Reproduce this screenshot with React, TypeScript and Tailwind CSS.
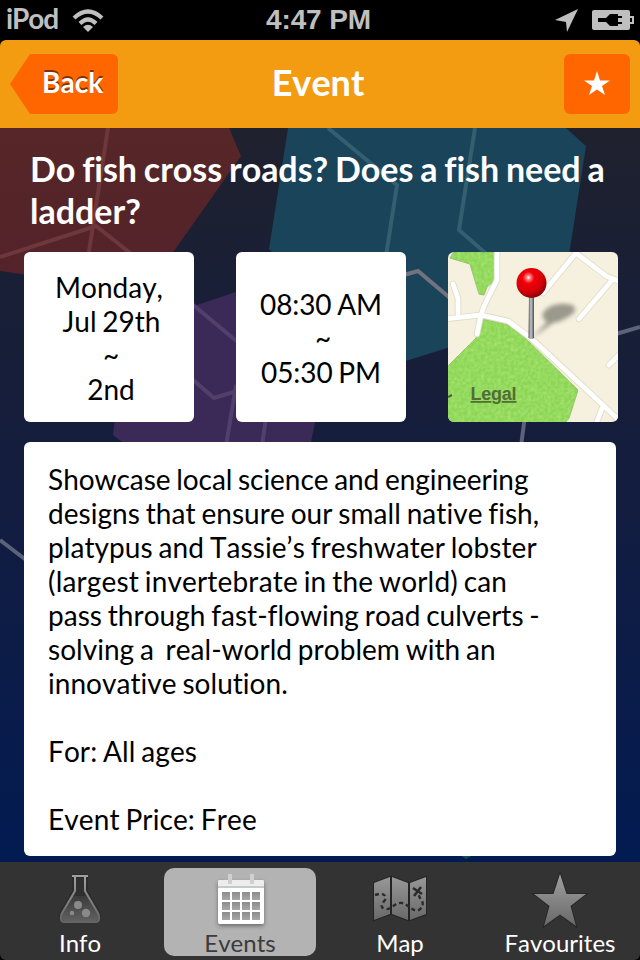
import type { ReactNode } from "react";

function Backdrop() {
  return (
    <svg className="absolute inset-0 h-full w-full" viewBox="0 128 640 734" preserveAspectRatio="none" aria-hidden="true">
      <defs>
        <linearGradient id="night" x1="0" y1="0" x2="0" y2="1">
          <stop offset="0" stopColor="#1f212e" />
          <stop offset="0.2" stopColor="#191f35" />
          <stop offset="0.45" stopColor="#141d3d" />
          <stop offset="0.75" stopColor="#0b1c49" />
          <stop offset="1" stopColor="#021b52" />
        </linearGradient>
        <linearGradient id="red" x1="0" y1="0" x2="0" y2="1">
          <stop offset="0" stopColor="#562628" />
          <stop offset="1" stopColor="#54222a" />
        </linearGradient>
      </defs>
      <rect y="128" width="640" height="734" fill="url(#night)" />
      <path d="M0 128H229L241 156L145 292L0 271Z" fill="url(#red)" />
      <path d="M288 128H566L586 146L560 313L380 369L269 249Z" fill="#19445a" />
      <path d="M125 329L236 292L330 350L311 442H122L113 435Z" fill="#3b2a57" />
      <g fill="none" strokeWidth="4">
        <path d="M108 128L88 258M0 257L96 226L134 256" stroke="#6d383c" />
        <path d="M328 128L397 185L386 256M475 128L459 230L490 257" stroke="#345f71" />
        <path d="M400 276L418 271L450 298" stroke="#75727f" />
        <path d="M192 304L240 344M192 379L214 398L240 390M236 385L226 446M267 410L262 446" stroke="#533f6c" />
        <path d="M0 540L30 563M616 334L640 327M525 416L521 446" stroke="#5c6277" />
      </g>
      <path d="M460 855L473 855L466 859Z" fill="#11513f" />
    </svg>
  );
}

function StatusBar() {
  return (
    <div className="flex h-10 items-center justify-between bg-black font-['Liberation_Sans',sans-serif] text-[#bfbfbf]">
      <div className="flex w-[200px] items-center pl-[6px]">
        <span className="w-[64px] pb-[3px] font-[Lato,sans-serif] text-[28px] leading-[37px] font-bold tracking-[-1.1px]">iPod</span>
        <svg width="34" height="26" viewBox="70 6 34 26" fill="none">
          <path d="M74 17Q88 4 102 17M80 22.5Q88 14.5 96 22.5" stroke="#bfbfbf" strokeWidth="4.2" />
          <path d="M83 26Q88 21.5 93 26L88 31Z" fill="#bfbfbf" />
        </svg>
      </div>
      <span className="-ml-[3px] text-[28px] leading-10 font-bold tracking-[-0.1px]">4:47 PM</span>
      <div className="flex w-[200px] justify-end pr-[5px]">
        <svg width="80" height="26" viewBox="555 6 80 26">
          <path d="M578 8L555 19L566 21L567 31Z" fill="#bfbfbf" />
          <path d="M594 9H628Q630 9 630 11V15H634V23H630V27Q630 29 628 29H594Q592 29 592 27V11Q592 9 594 9Z" fill="#bfbfbf" />
          <path d="M598 17H606L610 13H618V15H622V17H618V21H622V23H618V25H610L606 21H598ZM630 17H632V21H630Z" fill="#000" />
        </svg>
      </div>
    </div>
  );
}

function Header() {
  return (
    <header className="flex h-[88px] items-center justify-between rounded-t-[6px] bg-[#f39c12] pr-[10px] pl-[10px] text-white">
      <button className="flex h-[60px] w-[108px] items-center rounded-r-[6px] bg-[#ff6600] pl-[32px] [clip-path:polygon(0_50%,20px_0,100%_0,100%_100%,20px_100%)]">
        <span className="pb-[4px] text-[28px] leading-[34px] font-bold [text-shadow:0_-2px_0_#803300]">Back</span>
      </button>
      <h1 className="-ml-[4px] pb-[4px] text-[36px] leading-[44px] font-bold">Event</h1>
      <div className="flex w-[108px] justify-end">
        <button className="flex h-[60px] w-[66px] items-center justify-center rounded-[6px] bg-[#ff6600]">
          <svg width="26" height="26" viewBox="0 0 26 26">
            <path d="M13 0L16 9.500H26L18 15L21 24L13 18.500L5 24L8 15L0 9.500H10Z" fill="#fff" />
          </svg>
        </button>
      </div>
    </header>
  );
}

function MapTile() {
  return (
    <svg className="h-[170px] w-[170px] shrink-0 rounded-[6px]" viewBox="0 0 170 170">
      <defs>
        <filter id="grass" x="0" y="0" width="1" height="1" colorInterpolationFilters="sRGB">
          <feTurbulence type="fractalNoise" baseFrequency="0.3" numOctaves="2" seed="4" result="n" />
          <feColorMatrix in="n" type="matrix" values="0 0 0 0 0.67  0 0 0 0 0.9  0 0 0 0 0.46  1.6 0 0 0 -0.5" result="c" />
          <feComposite in="c" in2="SourceAlpha" operator="in" result="t" />
          <feMerge><feMergeNode in="SourceGraphic" /><feMergeNode in="t" /></feMerge>
        </filter>
        <filter id="soft" x="-30%" y="-30%" width="160%" height="160%"><feGaussianBlur stdDeviation="2" /></filter>
        <radialGradient id="ball" cx="0.4" cy="0.32" r="0.7">
          <stop offset="0" stopColor="#fff" />
          <stop offset="0.12" stopColor="#ff7070" />
          <stop offset="0.28" stopColor="#f10008" />
          <stop offset="0.65" stopColor="#d90008" />
          <stop offset="1" stopColor="#880006" />
        </radialGradient>
        <linearGradient id="needle">
          <stop offset="0" stopColor="#50545c" />
          <stop offset="0.45" stopColor="#c5c9ce" />
          <stop offset="1" stopColor="#454a53" />
        </linearGradient>
      </defs>
      <rect width="170" height="170" fill="#f6f0df" />
      <g fill="#8cd656" stroke="#91b768" strokeWidth="1" filter="url(#grass)">
        <path d="M6 0H47V28L39 35L36 43L31 42L22 12L2 6Z" />
        <path d="M36 67L60 73L74 83L130 138L121 166L117 171H-1V115L28 86Z" />
      </g>
      <g fill="none" strokeLinecap="round" strokeLinejoin="round">
        <g stroke="#dfdcc7" strokeWidth="6.500">
          <path d="M-3 67L33 63L60 69L84 87L172 169M49 -3V28L36 54L33 63L29 82M5 32L10 46V62" />
          <path d="M95 41L128 1L158 24L173 30M165 27L131 67M173 101L161 113M155 154L148 172" />
        </g>
        <g stroke="#fff" strokeWidth="4.800">
          <path d="M-3 67L33 63L60 69L84 87L172 169M49 -3V28L36 54L33 63L29 82M5 32L10 46V62" />
          <path d="M95 41L128 1L158 24L173 30M165 27L131 67M173 101L161 113M155 154L148 172" />
        </g>
      </g>
      <path d="M0 145L4 143" stroke="#555" strokeWidth="2" />
      <path d="M84 86L99 70Q91 65 97 58Q108 49 124 53Q132 58 120 65Q112 70 105 71Z" fill="#74736a" opacity="0.7" filter="url(#soft)" />
      <path d="M81 43H86V86Q83.500 88 80.500 86Z" fill="url(#needle)" />
      <circle cx="83.500" cy="31" r="15" fill="url(#ball)" />
      <text x="22.500" y="148" fontSize="18" fontWeight="700" fontFamily="Liberation Sans, Arial, sans-serif" fill="#516e38" textDecoration="underline" textLength="46">Legal</text>
    </svg>
  );
}

function InfoCard({ children }: { children: ReactNode }) {
  return (
    <div className="flex h-[170px] w-[170px] shrink-0 flex-col items-center justify-center rounded-[6px] bg-white pt-[1px] pl-[4px] text-[28px] leading-[34px] [word-spacing:-1.4px] whitespace-pre text-black">
      {children}
    </div>
  );
}

const description = [
  { text: "Showcase local science and engineering", tracking: "tracking-[-0.05px]" },
  { text: "designs that ensure our small native fish,", tracking: "tracking-[0.05px]" },
  { text: "platypus and Tassie’s freshwater lobster", tracking: "tracking-[0.08px]" },
  { text: "(largest invertebrate in the world) can", tracking: "tracking-[0.15px]" },
  { text: "pass through fast-flowing road culverts -", tracking: "tracking-[0.02px]" },
  { text: "solving a  real-world problem with an", tracking: "tracking-[0.03px]" },
  { text: "innovative solution.", tracking: "tracking-[0.04px]" },
  { text: " ", tracking: "" },
  { text: "For: All ages", tracking: "tracking-[0.08px]" },
  { text: " ", tracking: "" },
  { text: "Event Price: Free", tracking: "tracking-[0.1px]" },
];

function FlaskIcon() {
  return (
    <svg width="52" height="56" viewBox="0 0 52 56" className="shrink-0">
      <defs>
        <linearGradient id="flask" x1="0" y1="0" x2="0" y2="1">
          <stop offset="0" stopColor="#a0a0a0" /><stop offset="1" stopColor="#646464" />
        </linearGradient>
        <linearGradient id="liquid" x1="0" y1="0" x2="0" y2="1">
          <stop offset="0" stopColor="#3b3b3b" /><stop offset="1" stopColor="#606060" />
        </linearGradient>
      </defs>
      <path d="M20 4V19L7 42Q5 49 11 49H41Q47 49 45 42L32 19V4Z" fill="#303030" stroke="#2a2a2a" strokeWidth="4" opacity="0.7" />
      <path d="M18 24H34L44 42Q46 49 41 49H11Q6 49 8 42Z" fill="url(#liquid)" />
      <path d="M18 4H34M21 4V19L7.500 42Q5 50 11 50H41Q47 50 44.500 42L31 19V4" fill="none" stroke="url(#flask)" strokeWidth="2" />
      <g fill="#8a8a8a"><circle cx="24" cy="33" r="4" /><circle cx="32" cy="41" r="4.200" /><circle cx="18" cy="41" r="2.200" /></g>
    </svg>
  );
}

function CalendarIcon() {
  const rows = [20, 30, 40];
  const cols = [10, 20, 30, 40];
  return (
    <svg width="58" height="56" viewBox="-1 0 58 56" className="shrink-0 overflow-visible">
      <defs>
        <filter id="calShadow" x="-20%" y="-20%" width="140%" height="150%">
          <feDropShadow dx="0" dy="2" stdDeviation="2" floodColor="#333" floodOpacity="0.55" />
        </filter>
        <linearGradient id="cell" x1="0" y1="0" x2="0" y2="1">
          <stop offset="0" stopColor="#8c8c8c" /><stop offset="1" stopColor="#a8a8a8" />
        </linearGradient>
      </defs>
      <path d="M8 8H50Q52 8 52 10V50Q52 52 50 52H8Q6 52 6 50V10Q6 8 8 8Z" fill="#fff" filter="url(#calShadow)" />
      <path d="M6 10Q6 8 8 8H50Q52 8 52 10V14H6Z" fill="#ededed" />
      <path d="M6 14H52V16H6Z" fill="#c4cbcb" />
      <path d="M16 2H20V12H16ZM38 2H42V12H38Z" fill="#d0d0d0" />
      {rows.map((y) => cols.map((x) => <rect key={`${x}-${y}`} x={x} y={y} width="8" height="8" fill="url(#cell)" />))}
    </svg>
  );
}

function FoldedMapIcon() {
  return (
    <svg width="60" height="56" viewBox="0 0 60 56" className="shrink-0">
      <defs>
        <linearGradient id="fold" x1="0" y1="0" x2="0" y2="1">
          <stop offset="0" stopColor="#989898" /><stop offset="1" stopColor="#696969" />
        </linearGradient>
      </defs>
      <path d="M4 11L20 5V42L4 48ZM22 5L38 11V48L22 42ZM40 11L56 5V42L40 48Z" fill="url(#fold)" stroke="#242424" strokeWidth="2" paintOrder="stroke" />
      <path d="M5 23L11 21.500Q17 23 15 28Q8 36 16 37C21 38 25 30 32 31C39 32 41 40 49 38Q56 33 50 26L48 22" fill="none" stroke="#2b2b2b" strokeWidth="2.400" strokeDasharray="4 3" />
      <path d="M43 16L52 22M51 15L44 24" stroke="#2b2b2b" strokeWidth="2.600" />
    </svg>
  );
}

function StarIcon() {
  return (
    <svg width="60" height="56" viewBox="0 0 60 56" className="shrink-0">
      <defs>
        <linearGradient id="star" x1="0" y1="0" x2="0" y2="1">
          <stop offset="0" stopColor="#a0a0a0" /><stop offset="1" stopColor="#686868" />
        </linearGradient>
      </defs>
      <path d="M30 2L36.500 22H56L40.500 34L46 54L30 42.500L14 54L19.500 34L4 22H23.500Z" fill="url(#star)" stroke="#272727" strokeWidth="2" paintOrder="stroke" />
    </svg>
  );
}

function Tab({ icon, label, active = false }: { icon: ReactNode; label: string; active?: boolean }) {
  return (
    <div className={`flex h-[88px] w-[152px] flex-col items-center rounded-[10px] pt-[4px] ${active ? "bg-[#b3b3b3] text-[#3b3b3b]" : "text-white"}`}>
      {icon}
      <span className="-mt-[1px] text-[24px] leading-[32px]">{label}</span>
    </div>
  );
}

export default function App() {
  return (
    <div className="flex h-[960px] w-[640px] flex-col overflow-hidden bg-black font-[Lato,sans-serif] [font-kerning:none] [font-variant-ligatures:none]">
      <StatusBar />
      <Header />
      <main className="relative h-[734px]">
        <Backdrop />
        <div className="relative flex flex-col px-6">
          <h2 className="h-[124px] pt-[20px] pl-[6px] text-[34px] leading-[42px] font-bold whitespace-pre text-white">
            <div className="tracking-[-0.03px] [word-spacing:-1.4px]">Do fish cross roads? Does a fish need a</div>
            <div>ladder?</div>
          </h2>
          <div className="flex gap-[42px]">
            <InfoCard>
              <div className="-ml-[4px]">Monday,</div>
              <div className="ml-[1px]">Jul 29th</div>
              <div>~</div>
              <div>2nd</div>
            </InfoCard>
            <InfoCard>
              <div className="-ml-[4px] tracking-[-0.08px]">08:30 AM</div>
              <div>~</div>
              <div className="-ml-[4px] tracking-[-0.08px]">05:30 PM</div>
            </InfoCard>
            <MapTile />
          </div>
          <article className="mt-5 h-[414px] w-[592px] rounded-[6px] bg-white pt-[20px] pl-6 text-[28px] leading-[34px] [word-spacing:-1.4px] whitespace-pre text-black">
            {description.map(({ text, tracking }, i) => (
              <div key={i} className={tracking}>{text}</div>
            ))}
          </article>
        </div>
      </main>
      <nav className="flex h-[98px] justify-between rounded-b-[6px] bg-[#333] px-1 pt-[6px]">
        <Tab icon={<FlaskIcon />} label="Info" />
        <Tab icon={<CalendarIcon />} label="Events" active />
        <Tab icon={<FoldedMapIcon />} label="Map" />
        <Tab icon={<StarIcon />} label="Favourites" />
      </nav>
    </div>
  );
}
